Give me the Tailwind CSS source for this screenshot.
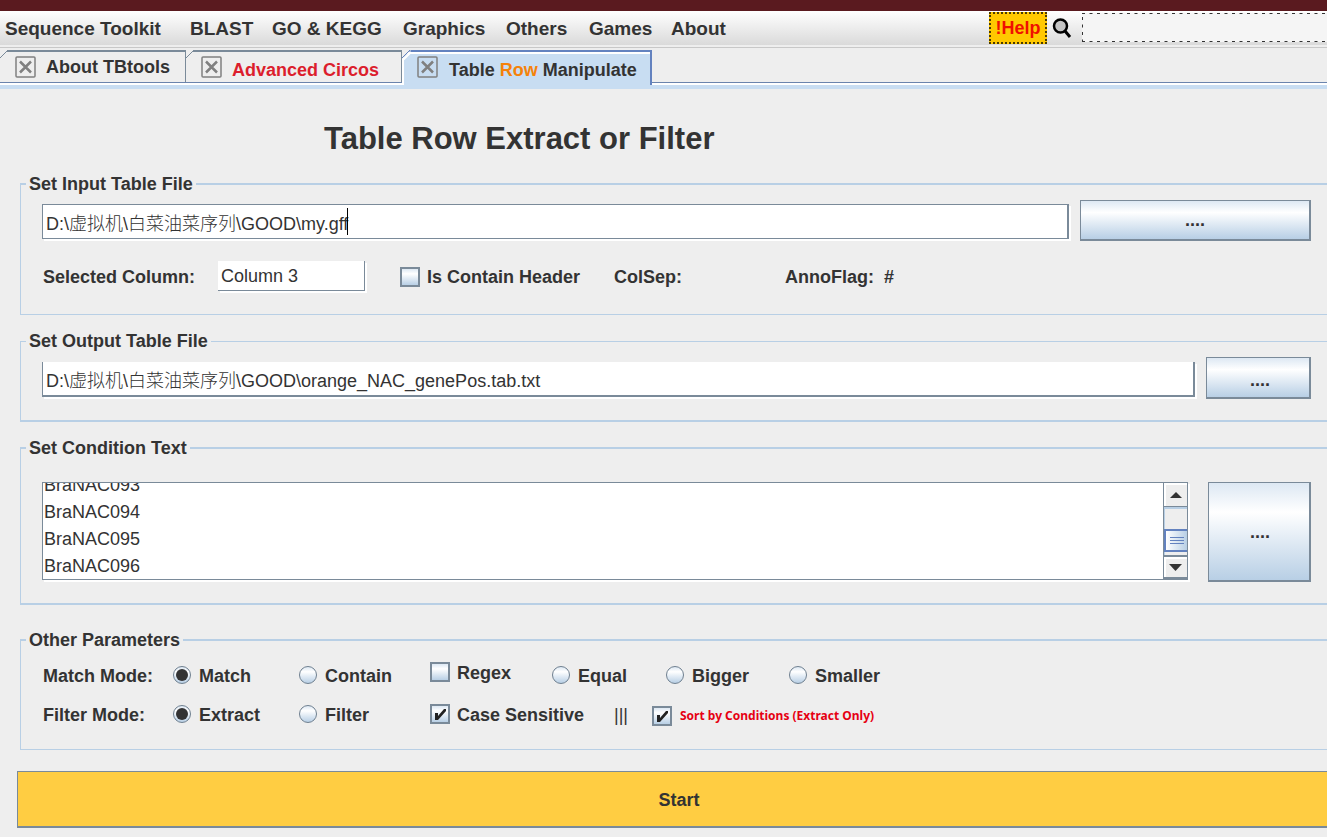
<!DOCTYPE html>
<html lang="en">
<head>
<meta charset="utf-8">
<meta name="viewport" content="width=device-width, initial-scale=1">
<title>Table Row Manipulate</title>
<script src="https://cdn.jsdelivr.net/npm/@tailwindcss/browser@4"></script>
</head>
<body class="min-h-screen overflow-x-hidden bg-[#eeeeee] pb-2 font-['Liberation_Sans','Noto_Sans_CJK_SC',sans-serif] text-lg/5 font-bold text-[#333333]">

<div class="h-[11px] bg-[#5a1a1f]"></div>

<header class="h-[37px] border-b border-[#c8c8c8] bg-[#eeeeee]">
  <div class="flex h-[34px] items-start bg-linear-to-b from-white to-[#dadada]">
  <nav class="flex h-[34px] flex-1 items-center text-left pt-px pl-[5px] text-[19px]/6">
    <button class="w-[185px] text-left">Sequence Toolkit</button>
    <button class="w-[82px] text-left">BLAST</button>
    <button class="w-[131px] text-left">GO &amp; KEGG</button>
    <button class="w-[103px] text-left">Graphics</button>
    <button class="w-[83px] text-left">Others</button>
    <button class="w-[82px] text-left">Games</button>
    <button class="text-left">About</button>
  </nav>
  <button class="mt-px h-8 w-[58px] border-2 border-dotted border-[#4a3a00] bg-[#ffc800] text-[#f01000]">!Help</button>
  <button class="mt-[6px] ml-[5px]" aria-label="Search">
    <svg width="20" height="22" viewBox="0 0 20 22" fill="none">
      <circle cx="8.500" cy="9" r="6.500" fill="#c4c4c4" stroke="#000" stroke-width="2.500"/>
      <path d="M13 14L18 20" stroke="#000" stroke-width="3"/>
    </svg>
  </button>
  <div class="relative mt-[2px] ml-[10px] h-[29px] w-[245px]">
    <input type="text" aria-label="Search text" class="h-full w-full bg-[#f5f5f5] px-2 outline-none">
    <svg class="pointer-events-none absolute inset-0 h-full w-full" fill="none" stroke="#333" stroke-dasharray="3 4.500"><path d="M0 0.500H245M0.500 4V29M0 28.500H245"/></svg>
  </div>
  </div>
</header>

<div role="tablist" class="mt-[2px] flex h-[33px] border-b border-[#6b84ad]">
  <button role="tab" class="relative flex w-[186px] items-center border-t-2 border-r border-[#7a8a99] pl-[15px]">
    <svg class="absolute -top-[2px] left-0" width="8" height="9" viewBox="0 0 8 9"><path d="M0 0H8L0 8Z" fill="#eee"/><path d="M0 8L8 0" stroke="#7a8a99"/></svg>
    <svg width="21" height="22" viewBox="0 0 21 22" fill="none" stroke="#808080"><rect x="1" y="1" width="19" height="20" rx="1" stroke-width="1.500"/><path d="M5 5.500L16 16.500M16 5.500L5 16.500" stroke-width="2.500"/></svg>
    <span class="ml-[10px]">About TBtools</span>
  </button>
  <button role="tab" class="relative flex w-[216px] items-center border-t-2 border-r border-[#7a8a99] pl-[15px]">
    <svg class="absolute -top-[2px] left-0" width="8" height="9" viewBox="0 0 8 9"><path d="M0 0H8L0 8Z" fill="#eee"/><path d="M0 8L8 0" stroke="#7a8a99"/></svg>
    <svg width="21" height="22" viewBox="0 0 21 22" fill="none" stroke="#808080"><rect x="1" y="1" width="19" height="20" rx="1" stroke-width="1.500"/><path d="M5 5.500L16 16.500M16 5.500L5 16.500" stroke-width="2.500"/></svg>
    <span class="ml-[10px] pt-[6px] text-[#dc1e2d]">Advanced Circos</span>
  </button>
  <button role="tab" aria-selected="true" class="relative z-10 -mb-[3px] flex w-[250px] items-center border-t-2 border-r-2 border-[#6382bf] bg-[#c8ddf2] pb-[3px] pl-[15px] shadow-[inset_2px_2px_0_white]">
    <svg class="absolute -top-[2px] left-0" width="9" height="10" viewBox="0 0 9 10"><path d="M0 0H9L0 9Z" fill="#eee"/><path d="M1 10L9 2" stroke="#fff" stroke-width="2"/><path d="M0 8L8 0" stroke="#6382bf"/></svg>
    <svg width="21" height="22" viewBox="0 0 21 22" fill="none" stroke="#808080"><rect x="1" y="1" width="19" height="20" rx="1" stroke-width="1.500"/><path d="M5 5.500L16 16.500M16 5.500L5 16.500" stroke-width="2.500"/></svg>
    <span class="ml-[11px] pt-[6px]">Table <span class="text-[#f5820a]">Row</span> Manipulate</span>
  </button>
</div>
<div class="h-[6px] border-t-2 border-white bg-[#c8ddf2]"></div>

<main>
  <h1 class="pt-8 pl-[324px] text-[31px]/9">Table Row Extract or Filter</h1>

  <form class="mt-[17px]" onsubmit="return false">
    <fieldset class="ml-5 border-t-2 border-b border-l border-[#b8cfe5] pr-4 pb-[22px] pl-[21px]">
      <legend class="-ml-4 h-5 px-[3px]">Set Input Table File</legend>
      <div class="flex items-start gap-[11px] pt-[6px]">
        <div class="relative mt-1 min-w-0 flex-1">
          <input type="text" aria-label="Input table file" value="D:\虚拟机\白菜油菜序列\GOOD\my.gff" class="block h-[35px] w-full border border-r-2 border-[#7a8a99] bg-white px-[3px] font-light caret-transparent shadow-[2px_2px_0_white] outline-none">
          <span class="absolute top-1 left-[305px] h-[27px] w-px bg-black"></span>
        </div>
        <button class="h-[41px] w-[231px] border border-r-2 border-b-2 border-[#7a8a99] bg-linear-to-b from-[#dde8f3] via-white via-30% to-[#b8cfe5] text-center">....</button>
      </div>
      <div class="mt-5 flex h-[31px] items-center">
        <label for="column" class="w-[176px] pl-px">Selected Column:</label>
        <input id="column" type="text" value="Column 3" class="h-[30px] w-[147px] self-start border-r border-b border-[#7a8a99] bg-white px-[3px] pt-[2px] font-normal shadow-[2px_2px_0_white] outline-none">
        <label class="ml-[35px] flex w-[214px] items-center gap-[7px]"><input type="checkbox" class="size-5 appearance-none border-2 border-[#7a8a99] bg-linear-to-b from-[#dde8f3] via-white via-30% to-[#b8cfe5]">Is Contain Header</label>
        <span class="w-[171px]">ColSep:</span>
        <span>AnnoFlag:&nbsp; #</span>
      </div>
    </fieldset>

    <fieldset class="mt-4 ml-5 border-t border-b-2 border-l border-[#b8cfe5] pr-4 pb-[21px] pl-[21px]">
      <legend class="-ml-4 h-5 px-[3px]">Set Output Table File</legend>
      <div class="flex items-start gap-[11px] pt-[6px]">
        <input type="text" aria-label="Output table file" value="D:\虚拟机\白菜油菜序列\GOOD\orange_NAC_genePos.tab.txt" class="mt-[5px] h-[35px] min-w-0 flex-1 border-r-2 border-b-2 border-l border-[#7a8a99] bg-white px-[3px] pt-px font-light shadow-[2px_2px_0_white] outline-none">
        <button class="h-[42px] w-[105px] border border-r-2 border-b-2 border-[#7a8a99] bg-linear-to-b from-[#dde8f3] via-white via-30% to-[#b8cfe5] pt-1 pl-1 text-center">....</button>
      </div>
    </fieldset>

    <fieldset class="mt-4 ml-5 border-t-2 border-b-2 border-l border-[#b8cfe5] pr-4 pb-[21px] pl-[21px]">
      <legend class="-ml-4 h-5 px-[3px]">Set Condition Text</legend>
      <div class="flex items-start gap-[20px] pt-6">
        <div class="flex h-[98px] min-w-0 flex-1 border border-[#7a8a99] bg-white shadow-[2px_2px_0_white]">
          <textarea id="conditions" aria-label="Condition text" class="h-full min-w-0 flex-1 resize-none overflow-hidden pl-px text-lg/[27px] font-normal outline-none">BraNAC093
BraNAC094
BraNAC095
BraNAC096</textarea>
          <div class="flex w-6 flex-col border-l border-[#7a8a99]">
            <button aria-label="Scroll up" class="flex h-6 items-center justify-center border-b border-[#7a8a99] bg-[#eeeeee] shadow-[inset_2px_2px_0_white]">
              <svg width="12" height="6" viewBox="0 0 12 6"><path d="M6 0L12 6H0Z" fill="#333"/></svg>
            </button>
            <div class="flex flex-1 flex-col border-t-2 border-l border-[#b8cfe5] bg-[#eeeeee] pt-5">
              <div class="-ml-px flex h-[23px] flex-col items-center justify-center gap-[2px] border-2 border-r-0 border-[#6382bf] bg-linear-to-r from-white to-[#b8cfe5]">
                <span class="h-px w-[14px] bg-[#6382bf]"></span>
                <span class="h-px w-[14px] bg-[#6382bf]"></span>
                <span class="h-px w-[14px] bg-[#6382bf]"></span>
              </div>
            </div>
            <button aria-label="Scroll down" class="flex h-6 items-center justify-center border-t-2 border-b-2 border-[#7a8a99] bg-[#eeeeee] shadow-[inset_2px_2px_0_white]">
              <svg width="13" height="7" viewBox="0 0 13 7"><path d="M0 0H13L6.5 7Z" fill="#333"/></svg>
            </button>
          </div>
        </div>
        <button class="h-[100px] w-[103px] border border-r-2 border-b-2 border-[#7a8a99] bg-linear-to-b from-[#dde8f3] via-white via-30% to-[#b8cfe5] pl-[2px] text-center">....</button>
      </div>
    </fieldset>

    <fieldset class="mt-[25px] ml-5 border-t-2 border-b border-l border-[#b8cfe5] pr-4 pb-5 pl-[22px]">
      <legend class="-ml-[17px] h-5 px-[3px]">Other Parameters</legend>
      <div class="mt-[10px] flex h-[30px] items-center">
        <span class="w-[130px] pt-[2px]">Match Mode:</span>
        <label class="flex w-[126px] items-center gap-2"><input type="radio" name="match" checked class="grid size-[18px] appearance-none place-items-center rounded-full border border-[#6f8090] bg-linear-to-b from-[#dde8f3] via-white via-30% to-[#b8cfe5] checked:before:size-[12px] checked:before:rounded-full checked:before:bg-[#333333] checked:before:content-['']"><span class="pt-[2px]">Match</span></label>
        <label class="flex w-[131px] items-center gap-2"><input type="radio" name="match" class="size-[18px] appearance-none rounded-full border border-[#6f8090] bg-linear-to-b from-[#dde8f3] via-white via-30% to-[#b8cfe5]"><span class="pt-[2px]">Contain</span></label>
        <label class="flex w-[122px] items-center gap-[7px] pb-[6px]"><input type="checkbox" class="size-5 appearance-none border-2 border-[#7a8a99] bg-linear-to-b from-[#dde8f3] via-white via-30% to-[#b8cfe5]"><span class="pt-[2px]">Regex</span></label>
        <label class="flex w-[114px] items-center gap-2"><input type="radio" name="match" class="size-[18px] appearance-none rounded-full border border-[#6f8090] bg-linear-to-b from-[#dde8f3] via-white via-30% to-[#b8cfe5]"><span class="pt-[2px]">Equal</span></label>
        <label class="flex w-[123px] items-center gap-2"><input type="radio" name="match" class="size-[18px] appearance-none rounded-full border border-[#6f8090] bg-linear-to-b from-[#dde8f3] via-white via-30% to-[#b8cfe5]"><span class="pt-[2px]">Bigger</span></label>
        <label class="flex items-center gap-2"><input type="radio" name="match" class="size-[18px] appearance-none rounded-full border border-[#6f8090] bg-linear-to-b from-[#dde8f3] via-white via-30% to-[#b8cfe5]"><span class="pt-[2px]">Smaller</span></label>
      </div>
      <div class="mt-[9px] flex h-[30px] items-center">
        <span class="w-[130px] pt-[2px]">Filter Mode:</span>
        <label class="flex w-[126px] items-center gap-2"><input type="radio" name="filter" checked class="grid size-[18px] appearance-none place-items-center rounded-full border border-[#6f8090] bg-linear-to-b from-[#dde8f3] via-white via-30% to-[#b8cfe5] checked:before:size-[12px] checked:before:rounded-full checked:before:bg-[#333333] checked:before:content-['']"><span class="pt-[2px]">Extract</span></label>
        <label class="flex w-[131px] items-center gap-2"><input type="radio" name="filter" class="size-[18px] appearance-none rounded-full border border-[#6f8090] bg-linear-to-b from-[#dde8f3] via-white via-30% to-[#b8cfe5]"><span class="pt-[2px]">Filter</span></label>
        <label class="flex w-[184px] items-center gap-[7px]">
          <span class="relative size-5"><input type="checkbox" checked class="peer block size-5 appearance-none border-2 border-[#7a8a99] bg-linear-to-b from-[#dde8f3] via-white via-30% to-[#b8cfe5]"><svg class="pointer-events-none absolute inset-0 hidden peer-checked:block" width="20" height="20" viewBox="0 0 20 20"><path d="M5 9H8V12L14 5H16V7L8 16H5Z" fill="#222"/></svg></span>
          <span class="pt-[2px]">Case Sensitive</span>
        </label>
        <span class="w-[38px] pt-[2px] font-normal">|||</span>
        <label class="flex items-center gap-2 pt-[3px] font-['Noto_Sans',sans-serif] text-xs/4 text-[#e60012]">
          <span class="relative size-5"><input type="checkbox" checked class="peer block size-5 appearance-none border-2 border-[#7a8a99] bg-linear-to-b from-[#dde8f3] via-white via-30% to-[#b8cfe5]"><svg class="pointer-events-none absolute inset-0 hidden peer-checked:block" width="20" height="20" viewBox="0 0 20 20"><path d="M5 9H8V12L14 5H16V7L8 16H5Z" fill="#222"/></svg></span>
          Sort by Conditions (Extract Only)
        </label>
      </div>
    </fieldset>

    <div class="mt-[21px] -mr-[14px] ml-[17px]">
      <button class="h-[57px] w-full border border-b-2 border-[#7a8a99] bg-[#ffcd42] pt-px text-center">Start</button>
    </div>
  </form>
</main>

<script>
  // Scroll the condition list close to its end.
  const conditions = document.getElementById('conditions');
  conditions.scrollTop = 11;
</script>
</body>
</html>
